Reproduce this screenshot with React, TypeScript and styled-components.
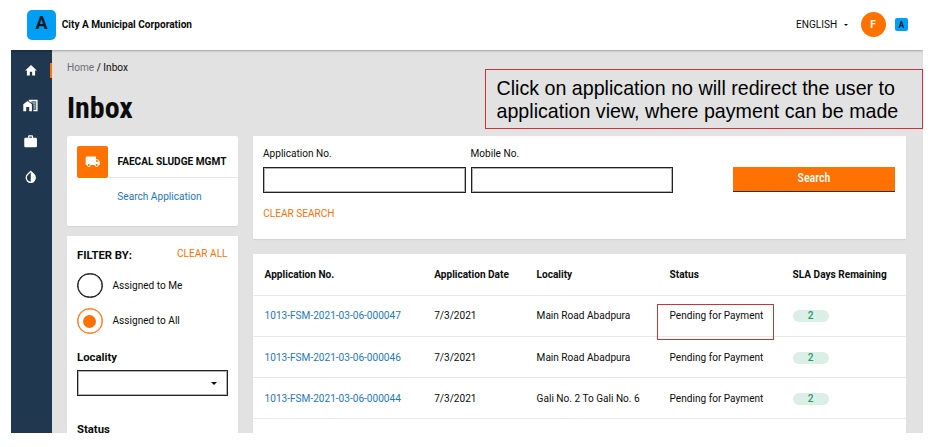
import React from 'react';
import styled, { createGlobalStyle } from 'styled-components';
import { MdWork, MdLocalShipping } from 'react-icons/md';

const GlobalStyle = createGlobalStyle`
  *, *::before, *::after { box-sizing: border-box; }
  body { margin: 0; background: #fff; font-family: Roboto, "Liberation Sans", sans-serif; font-size: 10.08px; line-height: 12px; color: #0b0c0c; }
`;

const ORANGE = '#ff7100';
const BLUE = '#1d78c4';

const Stage = styled.div`
  position: relative;
  width: 933px;
  height: 447px;
  padding-left: 11px;
  overflow: hidden;
`;

const AppFrame = styled.div`
  display: flex;
  flex-direction: column;
  width: 911.5px;
  height: 433px;
  overflow: hidden;
  background: #e2e2e2;
`;

const Header = styled.header`
  position: relative;
  z-index: 1;
  flex: none;
  display: flex;
  align-items: center;
  height: 50px;
  padding: 0 15px 1px 16px;
  background: #fff;
  box-shadow: 0 1px 2px rgba(0, 0, 0, 0.28);
`;

const Logo = styled.div<{ $small?: boolean }>`
  display: flex;
  align-items: center;
  justify-content: center;
  width: ${(p) => (p.$small ? 12.5 : 29)}px;
  height: ${(p) => (p.$small ? 13 : 30)}px;
  border-radius: ${(p) => (p.$small ? 2 : 5)}px;
  background: #009ff5;
  font-size: ${(p) => (p.$small ? 8.5 : 18)}px;
  font-weight: 700;
  padding-bottom: ${(p) => (p.$small ? 0 : 3)}px;
  color: #0b1a24;
`;

const City = styled.div`
  flex: 1;
  margin-left: 5.7px;
  font-size: 10.11px;
  font-weight: 700;
`;

const Language = styled.div`
  display: flex;
  align-items: center;
  gap: 6.5px;
  margin-right: 12.8px;
`;

const Caret = styled.span<{ $size: number }>`
  border: ${(p) => p.$size}px solid transparent;
  border-top-color: #0b0c0c;
  border-bottom: 0;
`;

const Avatar = styled.div`
  display: flex;
  align-items: center;
  justify-content: center;
  width: 25px;
  height: 25px;
  margin-right: 9.5px;
  border-radius: 50%;
  background: ${ORANGE};
  color: #fff;
  font-weight: 700;
`;

const Body = styled.div`
  flex: 1;
  display: flex;
  min-height: 0;
`;

const Sidebar = styled.nav`
  flex: none;
  width: 41px;
  background: #1f384f;
`;

const NavItem = styled.a<{ $active?: boolean }>`
  display: flex;
  align-items: center;
  justify-content: center;
  height: 15.5px;
  margin: ${(p) => (p.$active ? '12.5px 0 20px' : '0 0 20px')};
  border-right: 2.5px solid ${(p) => (p.$active ? ORANGE : 'transparent')};
  color: #fff;
`;

const Content = styled.main`
  flex: 1;
  padding: 12px 16px 0 15px;
`;

const Crumbs = styled.div`
  font-size: 10.1px;
  span { color: #6b6f70; }
`;

const Title = styled.h1`
  margin: 16.5px 0 0;
  font: 700 30px/34px "Roboto Condensed", Roboto, sans-serif;
`;

const Columns = styled.div`
  display: grid;
  grid-template-columns: 171px 653px;
  column-gap: 15px;
  margin-top: 11.5px;
`;

const Stack = styled.div<{ $gap: number }>`
  display: flex;
  flex-direction: column;
  gap: ${(p) => p.$gap}px;
`;

const Card = styled.section<{ $height: number; $radius?: number }>`
  height: ${(p) => p.$height}px;
  background: #fff;
  border-radius: ${(p) => p.$radius ?? 0}px;
  box-shadow: 0 1px 1px rgba(0, 0, 0, 0.06);
`;

const ModuleHead = styled.div`
  display: flex;
  padding: 10px 0 0 10px;
`;

const ModuleIcon = styled.div`
  display: flex;
  align-items: center;
  justify-content: center;
  width: 30.5px;
  height: 31.5px;
  border-radius: 2px;
  background: ${ORANGE};
  color: #fff;
`;

const ModuleName = styled.div`
  flex: 1;
  padding: 9.5px 0 0 10px;
  border-bottom: 1px solid #e8e8e8;
  font-size: 10.1px;
  font-weight: 700;
  white-space: nowrap;
`;

const ModuleLink = styled.a`
  display: block;
  margin: 13.5px 0 0 50.3px;
  font-size: 10.12px;
  color: ${BLUE};
`;

const FilterBody = styled.div`
  padding: 12px 10.5px 0 10px;
`;

const FilterHead = styled.div`
  display: flex;
  justify-content: space-between;
  margin-bottom: 11px;
`;

const GroupLabel = styled.div`
  font-size: 11.34px;
  line-height: 14px;
  font-weight: 700;
`;

const OrangeLink = styled.a`
  color: ${ORANGE};
`;

const RadioRow = styled.label`
  display: flex;
  align-items: center;
  gap: 10px;
  height: 25px;
  margin-bottom: 10.6px;
  font-size: 10.12px;
`;

const Radio = styled.span<{ $on?: boolean }>`
  display: flex;
  align-items: center;
  justify-content: center;
  width: 25.5px;
  height: 25.5px;
  border: 1px solid ${(p) => (p.$on ? ORANGE : '#0b0c0c')};
  border-radius: 50%;
  box-shadow: inset 0 0 0 0.5px ${(p) => (p.$on ? ORANGE : '#0b0c0c')};
  &::after {
    content: '';
    width: 13px;
    height: 13px;
    border-radius: 50%;
    background: ${(p) => (p.$on ? ORANGE : 'transparent')};
  }
`;

const LocalityGroup = styled.div`
  margin: 16.4px 0 26.4px;
`;

const Select = styled.div`
  display: flex;
  align-items: center;
  justify-content: flex-end;
  height: 25.5px;
  margin-top: 6.2px;
  padding: 2px 10px 0 0;
  border: 1px solid #222;
  box-shadow: inset 0 0 0 1px rgba(34, 34, 34, 0.35);
`;

const SearchForm = styled.div`
  display: flex;
  padding: 12px 11px 0 10px;
`;

const Field = styled.label`
  width: 202.5px;
  margin-right: 5px;
`;

const Input = styled.div`
  height: 26px;
  margin-top: 6.5px;
  border: 1px solid #222;
  box-shadow: inset 0 0 0 1px rgba(34, 34, 34, 0.35);
`;

const SearchButton = styled.button`
  width: 162px;
  height: 25px;
  margin: 18.5px 0 0 auto;
  padding: 0;
  border: 0;
  border-bottom: 1px solid #3b2a1e;
  background: ${ORANGE};
  color: #fff;
  font: 500 12px/23px "Roboto Condensed", Roboto, sans-serif;
`;

const ClearSearch = styled(OrangeLink)`
  display: block;
  margin: 15.5px 0 0 10.3px;
`;

const Row = styled.div<{ $head?: boolean }>`
  display: grid;
  grid-template-columns: 169.6px 102.4px 133px 123px 1fr;
  align-items: center;
  height: 41.3px;
  padding: 1px 0 0 11.6px;
  border-bottom: 1px solid #e9e9e9;
  font-weight: ${(p) => (p.$head ? 700 : 400)};
  white-space: nowrap;
`;

const AppLink = styled.a`
  color: ${BLUE};
`;

const SlaBadge = styled.span`
  width: 36px;
  height: 12px;
  border-radius: 6px;
  background: #dbefe6;
  color: #259b6c;
  font-weight: 500;
  text-align: center;
`;

const Callout = styled.aside`
  position: absolute;
  z-index: 2;
  left: 485px;
  top: 69px;
  width: 438px;
  height: 60px;
  padding: 7px 0 0 10.5px;
  border: 1px solid #cc3336;
  color: #000;
  font: 19.65px/23px "Liberation Sans", Arial, sans-serif;
  white-space: nowrap;
`;

const Highlight = styled.div`
  position: absolute;
  z-index: 2;
  left: 657px;
  top: 304px;
  width: 117px;
  height: 36px;
  border: 1px solid #cc3336;
`;

const rows = [
  { id: '1013-FSM-2021-03-06-000047', locality: 'Main Road Abadpura' },
  { id: '1013-FSM-2021-03-06-000046', locality: 'Main Road Abadpura' },
  { id: '1013-FSM-2021-03-06-000044', locality: 'Gali No. 2 To Gali No. 6' },
];

const HomeIcon = () => (
  <svg width="14" height="15" viewBox="0 0 24 24" preserveAspectRatio="none" fill="currentColor">
    <path d="M10 20v-6h4v6h5v-8h3L12 3 2 12h3v8z" />
  </svg>
);

const BuildingIcon = () => (
  <svg width="15" height="13" viewBox="0 0 15 13" fill="currentColor">
    <path d="M.3 12.3V5.2L4.6 2l4.3 3.2v7.1H6.2V8H3.2v4.3z" />
    <path d="M5.8.7h8.8v11.6h-4.2v-1.3h2.8V2.2H8.4v1.6L5.8 1.9z" />
    <path d="M8.4 2.2h4.8V11h-2.8V5.2l-2-1.4z" opacity=".35" />
    <path d="M10.5 3.6h1.2v1.2h-1.2zM10.7 6h1.1v1.2h-1.1zM10.7 8.4h1.1v1.2h-1.1z" opacity=".5" />
  </svg>
);

const DropIcon = () => (
  <svg width="15.5" height="15.5" viewBox="0 0 24 24" fill="currentColor">
    <path d="M17.66 7.93L12 2.27 6.34 7.93c-3.12 3.12-3.12 8.19 0 11.31C7.9 20.8 9.95 21.58 12 21.58c2.05 0 4.1-.78 5.66-2.34 3.12-3.12 3.12-8.19 0-11.31zM12 19.59c-1.6 0-3.11-.62-4.24-1.76C6.62 16.69 6 15.19 6 13.59s.62-3.11 1.76-4.24L12 5.1v14.49z" />
  </svg>
);

export default function App() {
  return (
    <Stage>
      <GlobalStyle />
      <AppFrame>
        <Header>
          <Logo>A</Logo>
          <City>City A Municipal Corporation</City>
          <Language>
            ENGLISH
            <Caret $size={2.9} />
          </Language>
          <Avatar>F</Avatar>
          <Logo $small>A</Logo>
        </Header>
        <Body>
          <Sidebar>
            <NavItem $active><HomeIcon /></NavItem>
            <NavItem><BuildingIcon /></NavItem>
            <NavItem><MdWork size={15.2} /></NavItem>
            <NavItem><DropIcon /></NavItem>
          </Sidebar>
          <Content>
            <Crumbs><span>Home</span> / Inbox</Crumbs>
            <Title>Inbox</Title>
            <Columns>
              <Stack $gap={10}>
                <Card $height={90} $radius={2}>
                  <ModuleHead>
                    <ModuleIcon><MdLocalShipping size={15.5} /></ModuleIcon>
                    <ModuleName>FAECAL SLUDGE MGMT</ModuleName>
                  </ModuleHead>
                  <ModuleLink>Search Application</ModuleLink>
                </Card>
                <Card $height={210}>
                  <FilterBody>
                    <FilterHead>
                      <GroupLabel>FILTER BY:</GroupLabel>
                      <OrangeLink>CLEAR ALL</OrangeLink>
                    </FilterHead>
                    <RadioRow><Radio />Assigned to Me</RadioRow>
                    <RadioRow><Radio $on />Assigned to All</RadioRow>
                    <LocalityGroup>
                      <GroupLabel>Locality</GroupLabel>
                      <Select><Caret $size={3} /></Select>
                    </LocalityGroup>
                    <GroupLabel>Status</GroupLabel>
                  </FilterBody>
                </Card>
              </Stack>
              <Stack $gap={15}>
                <Card $height={103.3}>
                  <SearchForm>
                    <Field>Application No.<Input /></Field>
                    <Field>Mobile No.<Input /></Field>
                    <SearchButton>Search</SearchButton>
                  </SearchForm>
                  <ClearSearch>CLEAR SEARCH</ClearSearch>
                </Card>
                <Card $height={190}>
                  <Row $head>
                    <span>Application No.</span>
                    <span>Application Date</span>
                    <span>Locality</span>
                    <span>Status</span>
                    <span>SLA Days Remaining</span>
                  </Row>
                  {rows.map((r) => (
                    <Row key={r.id}>
                      <AppLink>{r.id}</AppLink>
                      <span>7/3/2021</span>
                      <span>{r.locality}</span>
                      <span>Pending for Payment</span>
                      <SlaBadge>2</SlaBadge>
                    </Row>
                  ))}
                </Card>
              </Stack>
            </Columns>
          </Content>
        </Body>
      </AppFrame>
      <Callout>
        Click on application no will redirect the user to
        <br />
        application view, where payment can be made
      </Callout>
      <Highlight />
    </Stage>
  );
}
